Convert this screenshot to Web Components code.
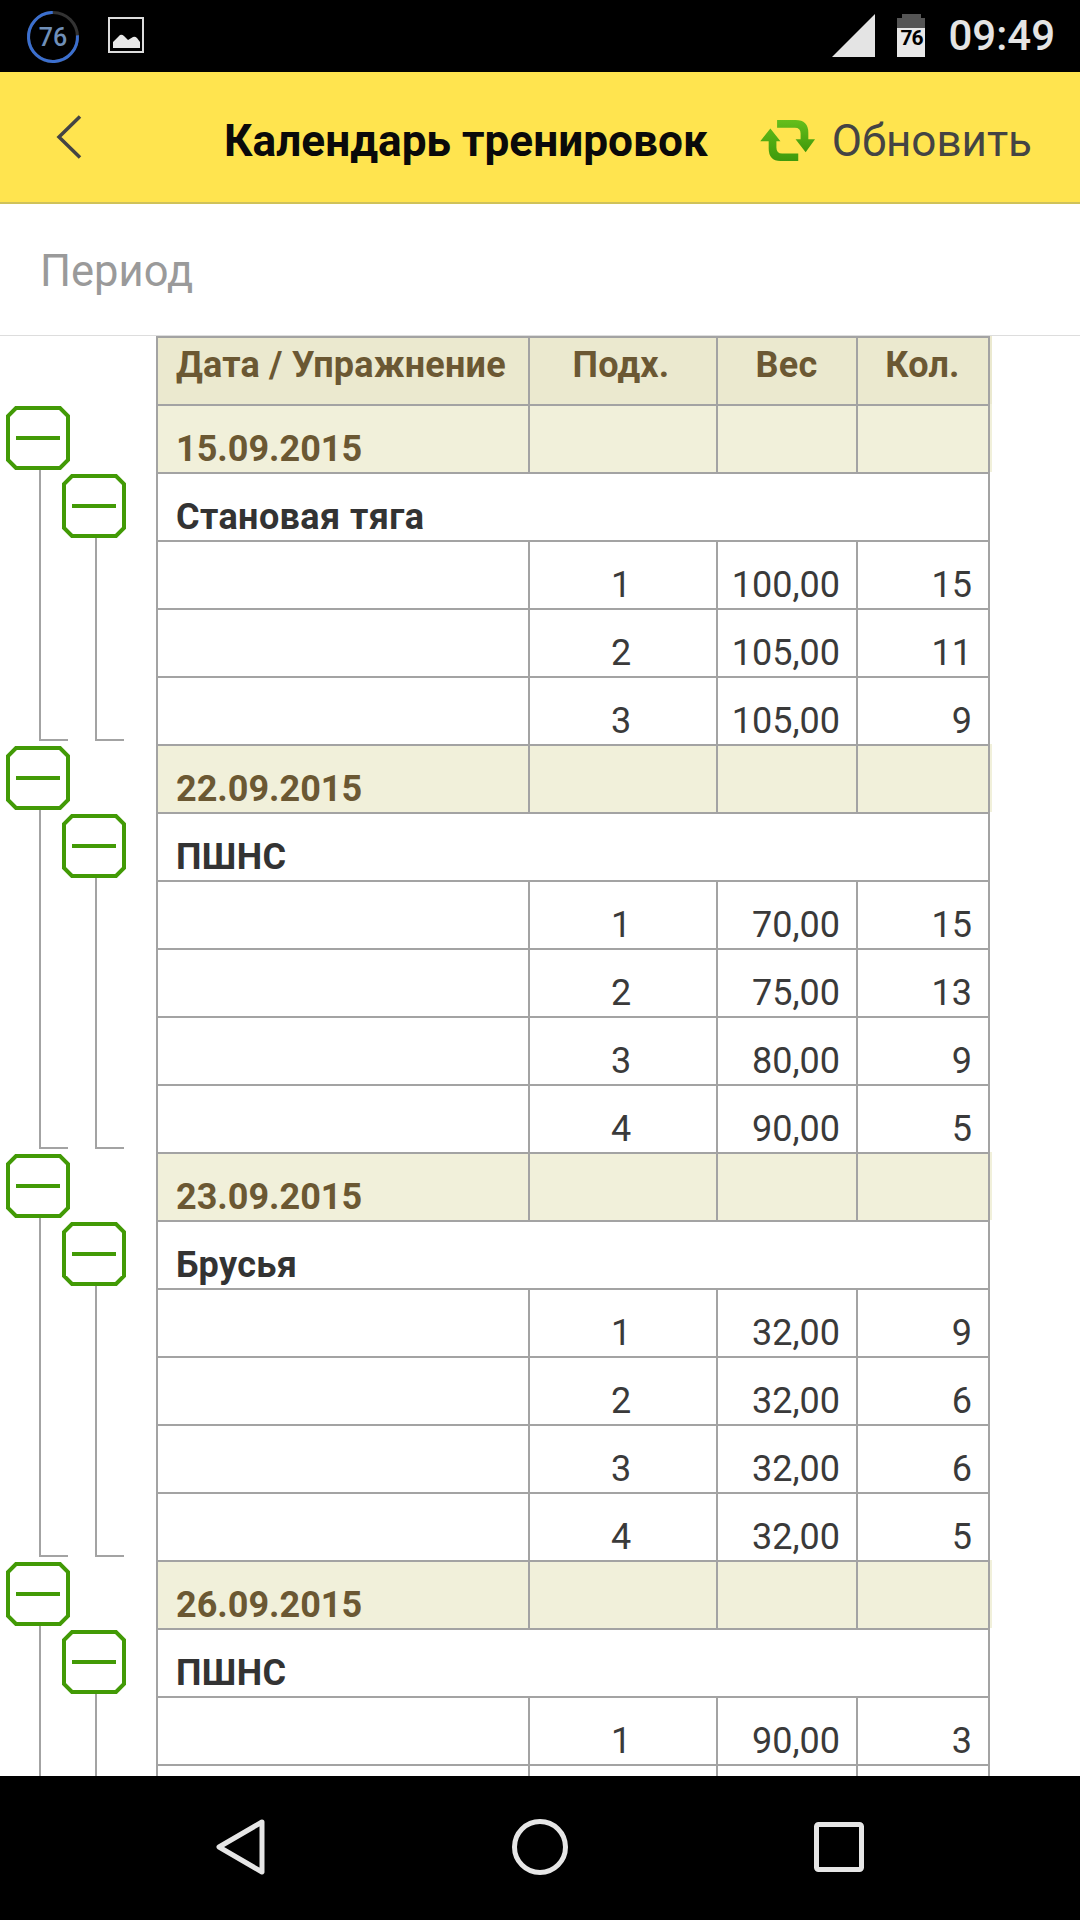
<!DOCTYPE html>
<html lang="ru">
<head>
<meta charset="utf-8">
<title>Календарь тренировок</title>
<style>
html, body { margin: 0; padding: 0; background: #fff; }
body { font-family: Roboto, "Liberation Sans", sans-serif; }
</style>
</head>
<body>
<phone-screen>
  <status-bar slot="status"></status-bar>
  <app-header slot="header" caption="Обновить">Календарь тренировок</app-header>
  <period-filter slot="filter">Период</period-filter>

  <t-row kind="head">
    <t-cell>Дата / Упражнение</t-cell>
    <t-cell align="center">Подх.</t-cell>
    <t-cell align="center">Вес</t-cell>
    <t-cell align="center">Кол.</t-cell>
  </t-row>

  <day-group>
    <t-row kind="date" slot="date"><t-cell>15.09.2015</t-cell><t-cell></t-cell><t-cell></t-cell><t-cell></t-cell></t-row>
    <exercise-group>
      <t-row kind="exercise" slot="name"><t-cell span>Становая тяга</t-cell></t-row>
      <set-row n="1" w="100,00" c="15"></set-row>
      <set-row n="2" w="105,00" c="11"></set-row>
      <set-row n="3" w="105,00" c="9"></set-row>
    </exercise-group>
  </day-group>

  <day-group>
    <t-row kind="date" slot="date"><t-cell>22.09.2015</t-cell><t-cell></t-cell><t-cell></t-cell><t-cell></t-cell></t-row>
    <exercise-group>
      <t-row kind="exercise" slot="name"><t-cell span>ПШНС</t-cell></t-row>
      <set-row n="1" w="70,00" c="15"></set-row>
      <set-row n="2" w="75,00" c="13"></set-row>
      <set-row n="3" w="80,00" c="9"></set-row>
      <set-row n="4" w="90,00" c="5"></set-row>
    </exercise-group>
  </day-group>

  <day-group>
    <t-row kind="date" slot="date"><t-cell>23.09.2015</t-cell><t-cell></t-cell><t-cell></t-cell><t-cell></t-cell></t-row>
    <exercise-group>
      <t-row kind="exercise" slot="name"><t-cell span>Брусья</t-cell></t-row>
      <set-row n="1" w="32,00" c="9"></set-row>
      <set-row n="2" w="32,00" c="6"></set-row>
      <set-row n="3" w="32,00" c="6"></set-row>
      <set-row n="4" w="32,00" c="5"></set-row>
    </exercise-group>
  </day-group>

  <day-group>
    <t-row kind="date" slot="date"><t-cell>26.09.2015</t-cell><t-cell></t-cell><t-cell></t-cell><t-cell></t-cell></t-row>
    <exercise-group>
      <t-row kind="exercise" slot="name"><t-cell span>ПШНС</t-cell></t-row>
      <set-row n="1" w="90,00" c="3"></set-row>
      <set-row></set-row>
    </exercise-group>
  </day-group>

  <nav-bar slot="nav"></nav-bar>
</phone-screen>

<script>
// small helper, every element gets an open shadow root from a string
class Base extends HTMLElement {
  constructor() {
    super();
    this.attachShadow({ mode: "open" });
    this.shadowRoot.innerHTML = this.markup();
  }
  markup() {
    return "<slot></slot>";
  }
}

// page frame: bars stay put, the table is cut off by the nav bar
class PhoneScreen extends Base {
  markup() {
    return `
<style>
:host { display: flex; flex-direction: column; width: 1080px; height: 1920px; overflow: hidden; background: #fff; }
.table { flex: 1; min-height: 0; overflow: hidden; }
</style>
<slot name="status"></slot>
<slot name="header"></slot>
<slot name="filter"></slot>
<div class="table"><slot></slot></div>
<slot name="nav"></slot>`;
  }
}

class StatusBar extends Base {
  markup() {
    return `
<style>
:host { display: flex; align-items: center; height: 72px; background: #000; flex: none; color: #e4e4e4; }
.left { display: flex; align-items: center; margin-left: 26px; gap: 28px; }
.ring { position: relative; width: 54px; height: 54px; display: flex; align-items: center; justify-content: center; margin-top: 2px; }
.ring svg { position: absolute; inset: 0; }
.ring span { font-size: 25px; color: #6f8fb8; font-weight: 500; }
.pic { display: block; margin-top: -2px; }
.right { display: flex; align-items: center; margin-left: auto; margin-right: 25px; }
.signal { display: block; margin-top: -1px; }
.battery { display: flex; flex-direction: column; align-items: center; width: 28px; height: 43px; margin-left: 22px; margin-top: -1px; }
.nub { width: 19px; height: 4px; background: #555; }
.cap { width: 28px; height: 10px; background: #555; }
.charge { width: 28px; flex: 1; background: #e8e8e8; color: #000; font-size: 21px; font-weight: 700; line-height: 20px; text-align: center; letter-spacing: -1px; }
.time { font-size: 42px; font-weight: 500; line-height: 48px; margin-left: 23px; }
</style>
<div class="left">
  <div class="ring">
    <svg width="54" height="54" viewBox="0 0 54 54">
      <circle cx="27" cy="27" r="24.5" fill="none" stroke="#333" stroke-width="3"/>
      <circle cx="27" cy="27" r="24.5" fill="none" stroke="#3b6fcf" stroke-width="3" pathLength="100" stroke-dasharray="76 24" transform="rotate(-4 27 27)"/>
    </svg>
    <span>76</span>
  </div>
  <svg class="pic" width="36" height="36" viewBox="0 0 36 36">
    <rect x="1" y="1" width="34" height="34" fill="none" stroke="#ddd" stroke-width="2"/>
    <path d="M5 31 V25 L12 18 Q14 17 16 19 L20 23 L25 20 Q27 19 29 21 L32 25 V31 Z" fill="#e8e8e8"/>
  </svg>
</div>
<div class="right">
  <svg class="signal" width="43" height="43" viewBox="0 0 43 43"><path d="M0 43 L43 0 V43 Z" fill="#e4e4e4"/></svg>
  <div class="battery"><div class="nub"></div><div class="cap"></div><div class="charge">76</div></div>
  <span class="time">09:49</span>
</div>`;
  }
}

class AppHeader extends Base {
  static get observedAttributes() {
    return ["caption"];
  }
  attributeChangedCallback(name, oldValue, newValue) {
    this.shadowRoot.querySelector(".caption").textContent = newValue;
  }
  markup() {
    return `
<style>
:host { display: flex; align-items: center; box-sizing: border-box; height: 132px; flex: none; background: #ffe44f; border-bottom: 2px solid #cfc25a; }
.back { display: block; margin-left: 56px; flex: none; }
.title { margin: 7px 0 0 142px; font-size: 44.2px; font-weight: 700; color: #0a0a0a; line-height: 48px; white-space: nowrap; }
.refresh { display: flex; align-items: center; margin: 7px 48px 0 auto; }
.icon { display: block; margin-right: 16px; }
.caption { font-size: 44px; color: #444; line-height: 48px; }
</style>
<svg class="back" width="26" height="44" viewBox="0 0 26 44"><path d="M24 1.5 L3 22 L24 42.5" fill="none" stroke="#444" stroke-width="3.5"/></svg>
<span class="title"><slot></slot></span>
<span class="refresh">
  <svg class="icon" width="56" height="42" viewBox="35 40 165 125">
    <defs>
      <linearGradient id="g1" x1="0" y1="0" x2="0" y2="1"><stop offset="0" stop-color="#66bf1c"/><stop offset="1" stop-color="#3f980a"/></linearGradient>
      <linearGradient id="g2" x1="0" y1="0" x2="0" y2="1"><stop offset="0" stop-color="#5cb616"/><stop offset="1" stop-color="#3f9a0c"/></linearGradient>
    </defs>
    <path d="M85 40 H140 Q178 40 178 78 V97 H198 L170 136 L140 97 H155 V80 Q155 63 138 63 H85 Z" fill="url(#g1)"/>
    <path d="M148 162 H95 Q60 162 60 125 V103 H35 L65 65 L95 103 H83 V122 Q83 140 100 140 H148 Z" fill="url(#g2)"/>
  </svg>
  <span class="caption"></span>
</span>`;
  }
}

class PeriodFilter extends Base {
  markup() {
    return `
<style>
:host { display: flex; align-items: center; box-sizing: border-box; height: 132px; flex: none; padding: 4px 0 0 40px; border-bottom: 1px solid #ddd; font-size: 43.5px; color: #9a9a9a; background: #fff; }
</style>
<slot></slot>`;
  }
}

// table row, cell look is handed down to t-cell through custom properties
class TRow extends Base {
  markup() {
    return `
<style>
:host { display: grid; grid-template-columns: 372px 188px 140px 132px; box-sizing: border-box; width: 834px; height: 68px; margin-left: var(--row-indent, 156px); border-top: 2px solid #a3a3a3; border-right: 2px solid #a3a3a3; background: #fff; --cell-color: #3a3a3a; --cell-weight: 400; --cell-pb: 3px; --cell-size: 36px; --cell-ls: 0; }
:host([kind="head"]) { background: #ebe9cf; box-shadow: 2px 0 0 #ebe9cf; --cell-color: #6b5833; --cell-weight: 700; --cell-pb: 19px; --cell-ls: .2px; }
:host([kind="date"]) { background: #f1f0da; box-shadow: 2px 0 0 #f1f0da; --cell-color: #6b5833; --cell-weight: 700; --cell-pb: 3px; }
:host([kind="exercise"]) { --cell-color: #333; --cell-weight: 700; --cell-pb: 3px; --cell-ls: .4px; }
</style>
<slot></slot>`;
  }
}

class TCell extends Base {
  markup() {
    return `
<style>
:host { display: flex; align-items: flex-end; box-sizing: border-box; min-width: 0; padding: 0 16px var(--cell-pb) 18px; border-left: 2px solid #a3a3a3; font-size: var(--cell-size); font-weight: var(--cell-weight); color: var(--cell-color); letter-spacing: var(--cell-ls); line-height: 40px; white-space: nowrap; justify-content: flex-start; }
:host([align="center"]) { justify-content: center; padding-right: 19px; }
:host([align="center"]:nth-child(2)) { padding-right: 22px; }
:host([align="right"]) { justify-content: flex-end; }
:host([span]) { grid-column: 1 / -1; }
</style>
<slot></slot>`;
  }
}

class SetRow extends Base {
  markup() {
    const a = (k) => this.getAttribute(k) || "";
    return `
<style>:host { display: block; }</style>
<t-row>
  <t-cell></t-cell>
  <t-cell align="center">${a("n")}</t-cell>
  <t-cell align="right">${a("w")}</t-cell>
  <t-cell align="right">${a("c")}</t-cell>
</t-row>`;
  }
}

// collapse box of the tree, the octagon with a minus
class TreeToggle extends Base {
  markup() {
    return `
<style>
:host { display: block; width: 64px; height: 64px; flex: none; }
svg { display: block; }
</style>
<svg width="64" height="64" viewBox="0 0 64 64">
  <path d="M10 2 H54 L62 10 V54 L54 62 H10 L2 54 V10 Z" fill="#fff" stroke="#429a06" stroke-width="4"/>
  <rect x="10" y="30" width="44" height="4" fill="#429a06"/>
</svg>`;
  }
}

const gutterStyle = `
.gutter { display: flex; flex-direction: column; min-width: 0; padding: 2px 0 3px 6px; }
.elbow { flex: 1; box-sizing: border-box; width: 29px; margin-left: 33px; border-left: 2px solid #a3a3a3; border-bottom: 2px solid #a3a3a3; }
`;

class DayGroup extends Base {
  markup() {
    return `
<style>
:host { display: grid; grid-template-columns: 56px 1fr; --row-indent: 100px; }
${gutterStyle}
.body { min-width: 0; }
</style>
<div class="gutter"><tree-toggle></tree-toggle><div class="elbow"></div></div>
<div class="body"><slot name="date"></slot><slot></slot></div>`;
  }
}

class ExerciseGroup extends Base {
  markup() {
    return `
<style>
:host { display: grid; grid-template-columns: 100px 1fr; --row-indent: 0px; }
${gutterStyle}
.body { min-width: 0; }
</style>
<div class="gutter"><tree-toggle></tree-toggle><div class="elbow"></div></div>
<div class="body"><slot name="name"></slot><slot></slot></div>`;
  }
}

class NavBar extends Base {
  markup() {
    return `
<style>
:host { display: flex; align-items: center; justify-content: center; height: 144px; flex: none; background: #000; }
svg { display: block; }
.row { display: flex; align-items: center; margin-top: -2px; }
.home { margin-left: 246px; }
.recent { margin-left: 246px; }
</style>
<div class="row">
  <svg width="50" height="56" viewBox="0 0 50 56"><path d="M46 3 L3 28 L46 53 Z" fill="none" stroke="#e6e6e6" stroke-width="5" stroke-linejoin="round"/></svg>
  <svg class="home" width="56" height="56" viewBox="0 0 56 56"><circle cx="28" cy="28" r="25.5" fill="none" stroke="#e6e6e6" stroke-width="5"/></svg>
  <svg class="recent" width="50" height="50" viewBox="0 0 50 50"><rect x="2.5" y="2.5" width="45" height="45" rx="2" fill="none" stroke="#e6e6e6" stroke-width="5"/></svg>
</div>`;
  }
}

customElements.define("t-row", TRow);
customElements.define("t-cell", TCell);
customElements.define("set-row", SetRow);
customElements.define("tree-toggle", TreeToggle);
customElements.define("exercise-group", ExerciseGroup);
customElements.define("day-group", DayGroup);
customElements.define("status-bar", StatusBar);
customElements.define("app-header", AppHeader);
customElements.define("period-filter", PeriodFilter);
customElements.define("nav-bar", NavBar);
customElements.define("phone-screen", PhoneScreen);
</script>
</body>
</html>
